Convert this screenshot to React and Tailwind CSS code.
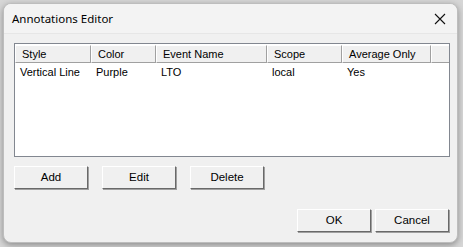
const columns = [
  { label: 'Style', width: 'w-[76px]' },
  { label: 'Color', width: 'w-[65px]' },
  { label: 'Event Name', width: 'w-[111px]' },
  { label: 'Scope', width: 'w-[75px]' },
  { label: 'Average Only', width: 'w-[89px]' },
];

const rows = [['Vertical Line', 'Purple', 'LTO', 'local', 'Yes']];

const ClassicButton = ({ label }) => (
  <button
    type="button"
    className="w-[74px] h-[23px] bg-[#f0f0f0] border border-t-white border-l-white border-r-[#696969] border-b-[#696969] shadow-[1px_1px_0_#a0a0a0] text-[11.5px] text-black"
  >
    {label}
  </button>
);

const App = () => {
  return (
    <div
      className="w-[463px] h-[247px] bg-[#d6d6d6] pt-[3px] pl-[3px] overflow-hidden"
      style={{ fontFamily: '"Liberation Sans", Arial, sans-serif' }}
    >
      {/* Window */}
      <div className="w-[455px] h-[240px] bg-[#f0f0f0] rounded-[8px] border border-[#bdbdbd] shadow-[0_2px_6px_rgba(0,0,0,0.35)] flex flex-col overflow-hidden">

        {/* Title bar */}
        <div className="h-[30px] bg-[#f3f3f3] border-b border-[#e6e6e6] flex items-center justify-between pl-[8px] pr-[10px]">
          <span className="text-[11.5px] text-black" style={{ fontFamily: '"Noto Sans", "Open Sans", sans-serif' }}>
            Annotations Editor
          </span>
          <svg width="12" height="12" viewBox="0 0 12 12" className="mr-[1px]">
            <path d="M1 1 L11 11 M11 1 L1 11" stroke="#111" strokeWidth="1.1" fill="none" />
          </svg>
        </div>

        {/* Client area */}
        <div className="flex flex-col px-[10px] pt-[9px]">

          {/* List view */}
          <div className="w-[436px] h-[114px] bg-white border border-[#828790] flex flex-col pt-[1px]">
            <div className="flex h-[18px] text-[11px] text-black">
              {columns.map((col) => (
                <div
                  key={col.label}
                  className={`${col.width} bg-[#f0f0f0] border-t border-l border-t-white border-l-white border-r border-b border-r-[#a0a0a0] border-b-[#a0a0a0] pl-[6px] leading-[17px]`}
                >
                  {col.label}
                </div>
              ))}
              <div className="flex-1 bg-[#f0f0f0] border-t border-l border-t-white border-l-white border-b border-b-[#a0a0a0]" />
            </div>
            {rows.map((row, i) => (
              <div key={i} className="flex h-[15px] text-[11px] text-black leading-[15px] mt-[2px]">
                {row.map((cell, j) => (
                  <div key={j} className={`${columns[j].width} pl-[5px]`}>{cell}</div>
                ))}
              </div>
            ))}
          </div>

          {/* Action buttons */}
          <div className="flex gap-[14px] mt-[9px]">
            <ClassicButton label="Add" />
            <ClassicButton label="Edit" />
            <ClassicButton label="Delete" />
          </div>

          {/* Dialog buttons */}
          <div className="flex justify-end gap-[4px] mt-[20px] mr-[-2px]">
            <ClassicButton label="OK" />
            <ClassicButton label="Cancel" />
          </div>
        </div>
      </div>
    </div>
  );
};

export default App;
